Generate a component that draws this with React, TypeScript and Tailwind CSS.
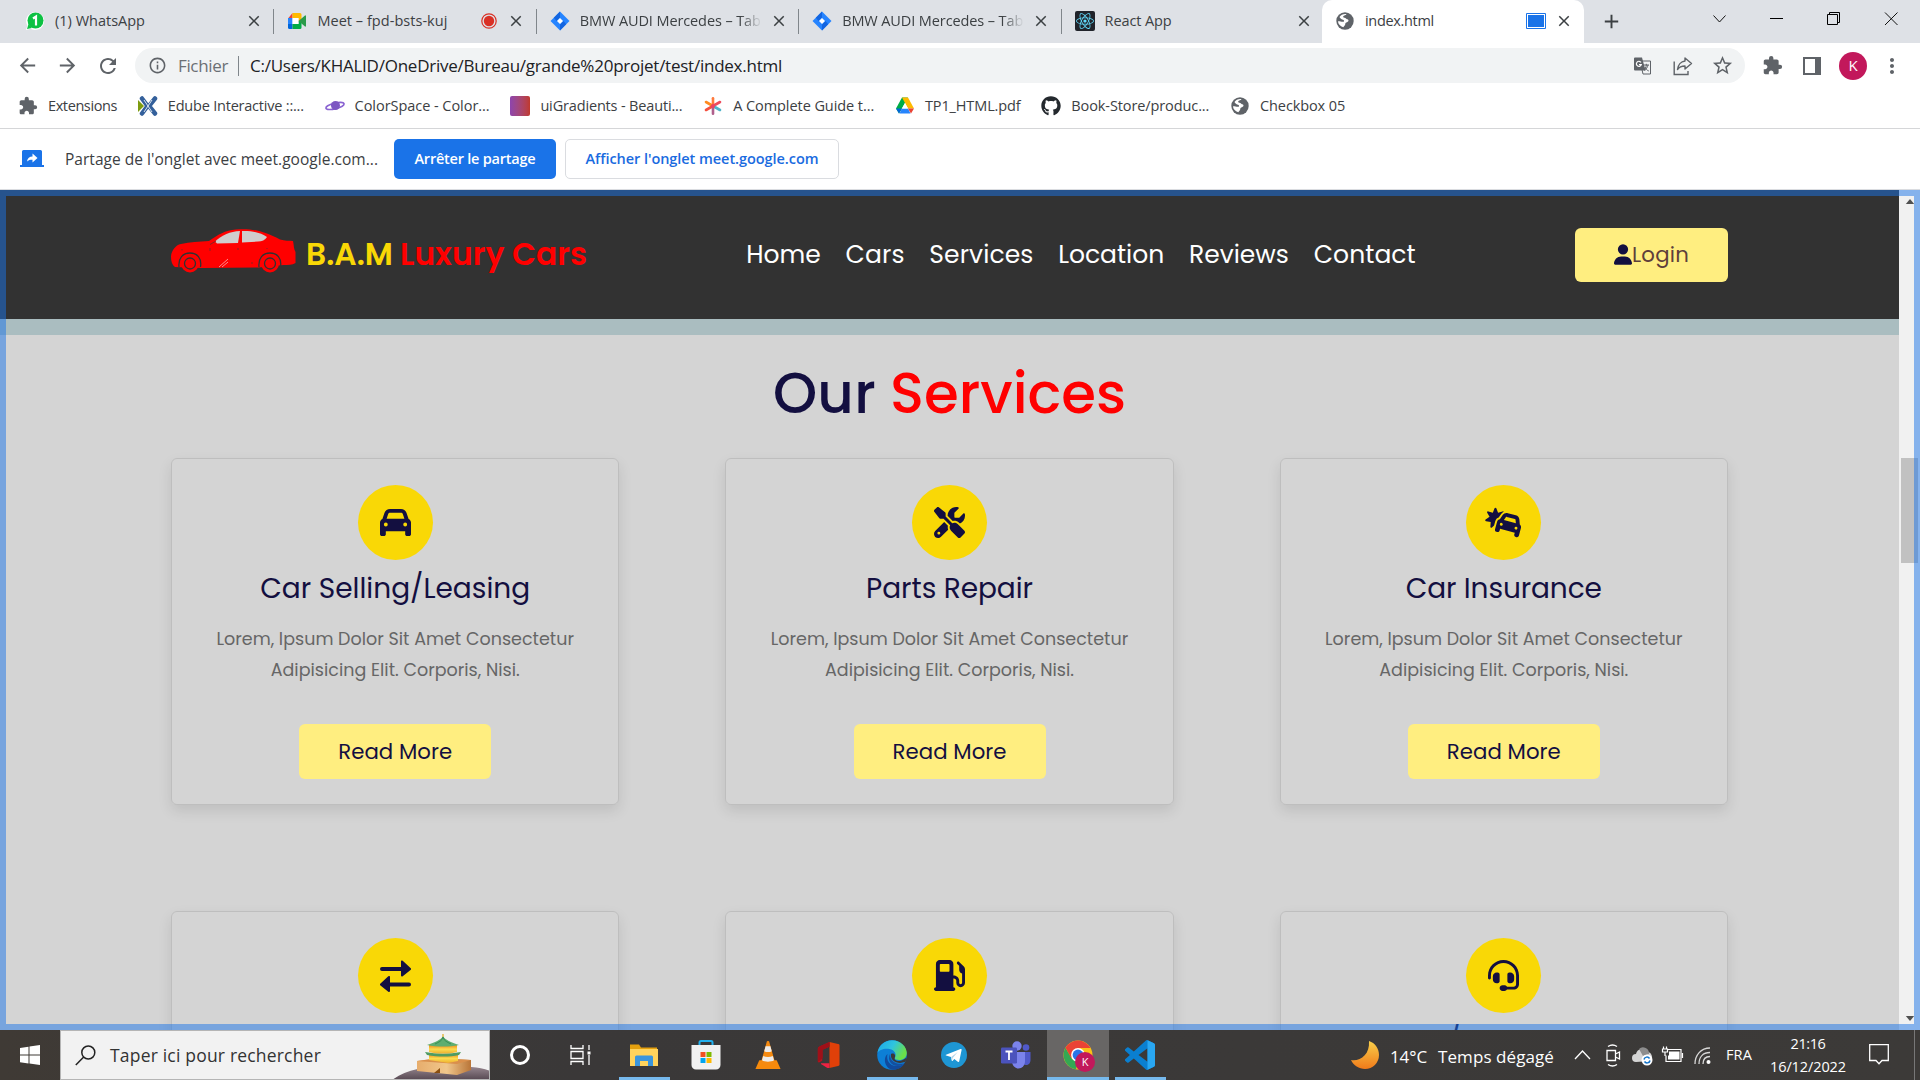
import { useLayoutEffect, useRef, useState, type ReactNode } from "react";
import { FaCar, FaCarBurst, FaGasPump, FaGithub, FaHeadset, FaReact, FaScrewdriverWrench, FaUser } from "react-icons/fa6";
import { MdArrowBack, MdArrowForward, MdClose, MdExtension, MdMoreVert, MdOutlineInfo, MdRefresh, MdStarBorder, MdAdd } from "react-icons/md";

/* One line of text tracked so that it fills a given width. */
function Line({ w, className = "", children }: { w: number; className?: string; children: string }) {
  const ref = useRef<HTMLSpanElement>(null);
  const [spacing, setSpacing] = useState(0);
  useLayoutEffect(() => {
    if (ref.current) {
      setSpacing((w - ref.current.getBoundingClientRect().width) / children.length);
    }
  }, [w, children]);
  return (
    <span className={"block shrink-0 whitespace-pre " + className} style={{ width: w }}>
      <span ref={ref} style={{ letterSpacing: spacing }}>{children}</span>
    </span>
  );
}

/* ---------- browser icons ---------- */

const WhatsApp = () => (
  <svg viewBox="0 0 20 20" className="size-5">
    <path d="M10 1a9 9 0 0 0-7.700 13.500L1 19l4.500-1.300A9 9 0 1 0 10 1z" fill="#fff" />
    <circle cx="10.500" cy="9.500" r="8" fill="#0dc143" />
    <path d="M2 18l1.500-5 3.500 4z" fill="#0dc143" />
    <path d="M8 7.500l3-2v9" stroke="#fff" strokeWidth="2.200" fill="none" />
  </svg>
);

const Meet = () => (
  <svg viewBox="0 0 20 20" className="size-5">
    <path d="M1 7.500L5.500 2v5.500z" fill="#ea4335" />
    <path d="M5.500 2H13a1.500 1.500 0 0 1 1.500 1.500V10h-3V7h-6z" fill="#ffba00" />
    <path d="M1 7h4.500v6H1z" fill="#2684fc" />
    <path d="M1 13h4.500v5H2.500A1.500 1.500 0 0 1 1 16.500z" fill="#0066da" />
    <path d="M5.500 13h6v-3h3v6.500A1.500 1.500 0 0 1 13 18H5.500z" fill="#00ac47" />
    <path d="M5.500 7h6v6h-6z" fill="#fff" />
    <path d="M11.500 10L18 4.500a.6.6 0 0 1 1 .5v10a.6.6 0 0 1-1 .5z" fill="#2b9a4a" />
  </svg>
);

const Jira = () => (
  <svg viewBox="0 0 20 20" className="size-5">
    <path d="M10 .5L19.500 10 10 19.500.5 10z" fill="#2684ff" />
    <path d="M10 .5v6L6.500 10 3.800 6.700z" fill="#1365e0" />
    <path d="M10 19.500v-6l3.500-3.500 2.700 3.300z" fill="#1365e0" />
    <path d="M10 7l3 3-3 3-3-3z" fill="#fff" />
  </svg>
);

const Globe = () => (
  <svg viewBox="0 0 18 18" className="size-[18px]">
    <circle cx="9" cy="9" r="8.700" fill="#5f6368" />
    <path d="M10.500 2.200c-1 1.400-3.500.8-3.300 2.800.1 1 2.300.4 2.800 1.500.4 1 2.700.6 2.500 2.200-.2 1.500-3 1.200-3.200 3 0 1.300-1 2-2 3.500C4 14 2 12 2 9.200 3.500 9 5.500 10 7.500 9.800c1-.2.600-1.800-.6-2C5 7.400 4 6 3.500 5 5 3 7.500 1.700 10.500 2.200z" fill="#fff" />
  </svg>
);

const Edube = () => (
  <svg viewBox="0 0 20 20" className="size-5">
    <path d="M4 2.500L9.500 10 4 17.500" stroke="#34609b" strokeWidth="4.500" strokeLinecap="round" fill="none" />
    <path d="M0 4l6 6-6 6z" fill="#7d9b10" />
    <path d="M17 2.500L11 10l6 7.500" stroke="#34609b" strokeWidth="4.500" strokeLinecap="round" fill="none" />
    <path d="M6 4l8 12M14 4L6 16" stroke="#dfe9f3" strokeWidth="1" />
  </svg>
);

const Planet = () => (
  <svg viewBox="0 0 20 20" className="size-5">
    <ellipse cx="10" cy="10" rx="9.300" ry="2.800" transform="rotate(-14 10 10)" fill="none" stroke="#8a63d2" strokeWidth="1.600" />
    <circle cx="10.500" cy="9.500" r="4.500" fill="#7d57c2" />
  </svg>
);

const Gradients = () => <span className="block size-5 rounded-xs bg-linear-to-r from-[#8e44ad] to-[#c0392b]" />;

const Asterisk = () => (
  <svg viewBox="0 0 20 20" className="size-5">
    <path d="M10 10V2.200" stroke="#ff7a3c" strokeWidth="2.600" strokeLinecap="round" />
    <path d="M10 10L3 6" stroke="#ff8a1f" strokeWidth="2.600" strokeLinecap="round" />
    <path d="M10 10l7-4" stroke="#ee4b5c" strokeWidth="2.600" strokeLinecap="round" />
    <path d="M10 10l7 4" stroke="#4fb3c8" strokeWidth="2.600" strokeLinecap="round" />
    <path d="M10 10l-7 4" stroke="#f4503f" strokeWidth="2.600" strokeLinecap="round" />
    <path d="M10 10v7.800" stroke="#b0608c" strokeWidth="2.600" strokeLinecap="round" />
    <circle cx="10" cy="10" r="2" fill="#ee4060" />
  </svg>
);

const Drive = () => (
  <svg viewBox="0 0 20 20" className="size-5">
    <path d="M7 1.500h6L4 17.500l-3-5z" fill="#00ac47" />
    <path d="M7 1.500h6l6 11h-6z" fill="#ffba00" />
    <path d="M7 12.500h6l2.500 5h-11z" fill="#2684fc" />
    <path d="M13 12.500h6l-3 5z" fill="#ea4335" />
    <path d="M4 17.500l-3-5h6z" fill="#0066da" />
    <path d="M7 12.500L10 7l3 5.500z" fill="#fff" />
  </svg>
);

const Translate = () => (
  <svg viewBox="0 0 18 18" className="size-[18px]">
    <path d="M6 4h10.500v13H9z" fill="none" stroke="#5f6368" strokeWidth="1" />
    <path d="M1 .5h7l3.500 13H1a1 1 0 0 1-1-1v-11a1 1 0 0 1 1-1z" fill="#5f6368" />
    <path d="M7 5.400A2.500 2.500 0 1 0 7.300 7.500H5" stroke="#fff" strokeWidth="1.200" fill="none" />
    <path d="M9.500 8h5.500M12.300 6.800V8c0 2-1.300 4-2.300 5M10.800 10c1 2 2.500 3.500 4 4M14 8c-.3 2-2 4.500-3.500 5.500" stroke="#5f6368" strokeWidth="1" fill="none" />
  </svg>
);

const Share = () => (
  <svg viewBox="0 0 20 20" className="size-5" fill="none" stroke="#5f6368" strokeWidth="1.400">
    <path d="M1.200 5.500v13H15v-3.500" />
    <path d="M12 2l6.500 5.500L12 13V10c-3.500 0-6 1.200-7.500 3.500C5 9 8 5.500 12 5z" strokeLinejoin="round" />
  </svg>
);

/* ---------- browser chrome ---------- */

function Tab({ icon, title, w, badge, active, faded }: { icon: ReactNode; title: string; w: number; badge?: ReactNode; active?: boolean; faded?: boolean }) {
  return (
    <div className={"flex h-[43px] w-[262.400px] shrink-0 items-center pb-px " + (active ? "-ml-[2px] rounded-t-[10px] bg-white" : "")}>
      <span className="ml-[13px] flex w-5 shrink-0 justify-center">{icon}</span>
      <span className={"ml-2.5 w-[182px] shrink-0 overflow-hidden " + (faded ? "mask-r-from-88%" : "")}>
        <span className="flex items-center pb-px">
          <Line w={w} className="text-[14.500px] leading-5 text-[#3c4043]">{title}</Line>
          {badge && <span className="ml-auto">{badge}</span>}
        </span>
      </span>
      <MdClose className="ml-2 size-[18px] shrink-0 text-[#3c4043]" />
      {!active && <span className="ml-auto h-[25px] w-px shrink-0 bg-[#80868b]" />}
    </div>
  );
}

function Bookmark({ icon, title, w }: { icon: ReactNode; title: string; w: number }) {
  return (
    <div className="flex items-center gap-2.5">
      <span className="flex w-5 justify-center">{icon}</span>
      <Line w={w} className="text-[14.500px] leading-5 text-[#3c4043]">{title}</Line>
    </div>
  );
}

function Browser() {
  return (
    <header className="bg-white">
      <div className="flex h-[43px] bg-[#dee1e6] pl-3">
        <Tab icon={<WhatsApp />} title="(1) WhatsApp" w={90} />
        <Tab
          icon={<Meet />}
          title="Meet – fpd-bsts-kuj"
          w={130}
          badge={<svg viewBox="0 0 16 16" className="mr-[2px] size-4"><circle cx="8" cy="8" r="7.200" fill="none" stroke="#d93025" strokeWidth="1.200" /><circle cx="8" cy="8" r="5.200" fill="#d93025" /></svg>}
        />
        <Tab icon={<Jira />} title="BMW AUDI Mercedes – Tab" w={181} faded />
        <Tab icon={<Jira />} title="BMW AUDI Mercedes – Tab" w={181} faded />
        <Tab icon={<span className="flex size-5 items-center justify-center rounded-xs bg-[#20232a]"><FaReact className="size-[18px] text-[#61dafb]" /></span>} title="React App" w={67} />
        <Tab
          active
          icon={<Globe />}
          title="index.html"
          w={69}
          badge={
            <svg viewBox="0 0 20 16" className="mr-px h-4 w-5">
              <path d="M.5.500h19v15H.5z" fill="#fff" stroke="#1a73e8" />
              <path d="M2 2h16v12H2z" fill="#1a73e8" />
            </svg>
          }
        />
        <MdAdd className="mt-[10px] ml-[16px] size-[23px] text-[#3c4043]" />
        <svg viewBox="0 0 190 20" className="mt-[9px] ml-[86px] h-5 w-[190px]" fill="none" stroke="#111" strokeWidth="1">
          <path d="M4.500 6.500l6 6.500 6-6.500" />
          <path d="M61 9.500h13" stroke="#000" />
          <path d="M118.500 5.500h10v10h-10zM120.500 5.500v-2h10v10h-2" stroke="#000" />
          <path d="M176 3.500l12.500 12.500M188.500 3.500L176 16" />
        </svg>
      </div>

      <div className="flex h-[45px] items-center">
        <MdArrowBack className="ml-4 size-[23px] text-[#5f6368]" />
        <MdArrowForward className="ml-[17px] size-[23px] text-[#5f6368]" />
        <MdRefresh className="ml-[17px] size-[24px] text-[#5f6368]" />
        <div className="ml-[15px] flex h-[35px] w-[1610px] items-center rounded-full bg-[#f1f3f4]">
          <MdOutlineInfo className="ml-[13px] size-[19px] text-[#5f6368]" />
          <Line w={50} className="ml-[11px] text-[17px] leading-6 text-[#6b6f74]">Fichier</Line>
          <span className="ml-[10px] h-5 w-px bg-[#80868b]" />
          <Line w={532} className="ml-[11px] text-[17px] leading-6 text-[#202124]">C:/Users/KHALID/OneDrive/Bureau/grande%20projet/test/index.html</Line>
          <span className="mr-[11px] ml-auto flex items-center gap-5">
            <span className="-mr-px"><Translate /></span>
            <span className="ml-[2px]"><Share /></span>
            <MdStarBorder className="-ml-[2px] size-[23px] text-[#5f6368]" />
          </span>
        </div>
        <MdExtension className="ml-[17px] size-[21px] text-[#5f6368]" />
        <span className="ml-5 block h-[18px] w-[18px] border-2 border-r-[6px] border-[#5f6368]" />
        <span className="ml-[18px] flex size-7 items-center justify-center rounded-full bg-[#c2185b] text-[15px] text-white">K</span>
        <MdMoreVert className="ml-[13px] size-6 text-[#5f6368]" />
      </div>

      <div className="flex h-[41px] items-center gap-[20.800px] border-b border-[#d5d6d8] pb-[4px] pl-[18px]">
        <Bookmark icon={<MdExtension className="size-5 text-[#5f6368]" />} title="Extensions" w={69} />
        <Bookmark icon={<Edube />} title="Edube Interactive ::..." w={136} />
        <Bookmark icon={<Planet />} title="ColorSpace - Color..." w={135} />
        <Bookmark icon={<Gradients />} title="uiGradients - Beauti..." w={142} />
        <Bookmark icon={<Asterisk />} title="A Complete Guide t..." w={141} />
        <Bookmark icon={<Drive />} title="TP1_HTML.pdf" w={95.500} />
        <Bookmark icon={<FaGithub className="size-5 text-[#24292e]" />} title="Book-Store/produc..." w={138} />
        <Bookmark icon={<Globe />} title="Checkbox 05" w={85} />
      </div>

      <div className="flex h-[61px] items-center border-b border-[#dadce0] pl-5">
        <svg viewBox="0 0 24 20" className="h-5 w-6">
          <path d="M3.500 1h17a1.500 1.500 0 0 1 1.500 1.500V16h2v2H0v-2h2V2.500A1.500 1.500 0 0 1 3.500 1z" fill="#1a73e8" />
          <path d="M7 12.500c.5-3.500 2.500-5 5.500-5.100V4.500l5 4.500-5 4.500v-2.800c-2.400 0-4 .3-5.500 1.800z" fill="#fff" />
        </svg>
        <Line w={313} className="ml-[21px] text-[15.500px] leading-6 text-[#3c4043]">Partage de l'onglet avec meet.google.com...</Line>
        <div className="ml-[16px] flex h-10 w-[162px] items-center justify-center rounded-[5px] bg-[#1a73e8]">
          <Line w={121} className="text-[14.500px] font-semibold text-white">Arrêter le partage</Line>
        </div>
        <div className="ml-[9px] flex h-10 w-[274px] items-center justify-center rounded-[5px] border border-[#dadce0]">
          <Line w={233} className="text-[14.500px] font-semibold text-[#1a6be0]">Afficher l'onglet meet.google.com</Line>
        </div>
      </div>
    </header>
  );
}

/* ---------- site ---------- */

const CarLogo = () => (
  <svg viewBox="0 0 126 44" className="-mt-2 -ml-px h-11 w-[126px]">
    <path d="M1 28c0-5 4-12 10-13 9-2 18-2.500 28-3C48 6 55 1 66 .5c16-1 27 1 44 10 5 1.500 9 1 13 1.500 1 4 .5 8 2.500 11v11c-3 2-8 2-12 2L88 38.500 32 39 5 38c-3-2-4-6-4-10z" fill="#f00" />
    <path d="M47 14.500l-2-2C52 6 60 2.500 70 2l-2 12z" fill="#d0cccc" />
    <path d="M72 2c10-.5 19 2 25 6-2 3-5 4.500-9 4.500L72 13.500z" fill="#d0cccc" />
    <path d="M9 38c-1-9 4-14 11-14s12 5 10.500 14M89 38c-1-9 4-14 11-14s12 5 10.500 14" fill="none" stroke="#323232" strokeWidth="1.300" />
    {[20, 100].map((x) => (
      <g key={x}>
        <circle cx={x} cy="34.500" r="9" fill="#f00" />
        <circle cx={x} cy="34.500" r="5.500" fill="none" stroke="#323232" strokeWidth="1.300" />
      </g>
    ))}
    <path d="M40 15.500l6-3.500M40 19v3M68 19v2M12 20v1.500M97 19v1M82 33v2" stroke="#8b2020" strokeWidth="1" />
    <path d="M49 38l9-8M52 38l6-5" stroke="#ff8c8c" strokeWidth="1" />
  </svg>
);

const Exchange = () => (
  <svg viewBox="0 0 31 32" className="h-8 w-[31px]" fill="currentColor">
    <path d="M2 7h19V1.500a1 1 0 0 1 1.700-.7L30.500 8a1.300 1.300 0 0 1 0 2L22.700 16.200a1 1 0 0 1-1.700-.7V11H2A2 2 0 0 1 2 7z" />
    <path d="M29 22.500H10V17a1 1 0 0 0-1.700-.7L.5 23.500a1.300 1.300 0 0 0 0 2l7.800 6.200A1 1 0 0 0 10 31v-4.500h19a2 2 0 0 0 0-4z" />
  </svg>
);

const nav = [
  { label: "Home", w: 74.5 },
  { label: "Cars", w: 59 },
  { label: "Services", w: 104 },
  { label: "Location", w: 106 },
  { label: "Reviews", w: 100 },
  { label: "Contact", w: 102 },
];

function Card({ icon, title, w, body }: { icon: ReactNode; title?: string; w?: number; body?: boolean }) {
  return (
    <article className="flex h-[347px] w-[448.500px] flex-col items-center rounded-md border border-black/10 pt-[26px] shadow-[0_6px_14px_rgba(0,0,0,0.1)]">
      <span className="flex size-[75px] shrink-0 items-center justify-center rounded-full bg-[#f9d806] text-[#130f40]">{icon}</span>
      {title && w && <Line w={w} className="mt-[9px] text-[28px] leading-10 text-[#130f40]">{title}</Line>}
      {body && (
        <>
          <div className="mt-[15px] flex flex-col items-center text-[17.500px] leading-[31px] text-[#666]">
            <Line w={357.5}>Lorem, Ipsum Dolor Sit Amet Consectetur</Line>
            <Line w={249}>Adipisicing Elit. Corporis, Nisi.</Line>
          </div>
          <span className="mt-[38px] flex h-[55px] w-[192px] shrink-0 items-center justify-center rounded-md bg-[#ffee80]">
            <Line w={114} className="text-[21.250px] leading-8 text-[#130f40]">Read More</Line>
          </span>
        </>
      )}
    </article>
  );
}

function Site() {
  return (
    <div className="relative flex h-[840px] overflow-hidden">
      <main className="h-[840px] w-[1859px] grow overflow-hidden bg-[#d4d4d4] font-[Poppins,Inter,sans-serif] [font-feature-settings:'cv11']">
        <div className="flex h-[129px] items-center justify-between bg-[#323232] px-[171px]">
          <div className="flex items-center">
            <CarLogo />
            <Line w={87} className="-mt-[2px] ml-[10px] text-[31.250px] leading-10 font-semibold text-[#f9d806]">B.A.M</Line>
            <Line w={187} className="-mt-[2px] ml-[7px] text-[31.250px] leading-10 font-semibold text-[#f00]">Luxury Cars</Line>
          </div>
          <nav className="flex gap-[24.800px]">
            {nav.map((n) => (
              <Line key={n.label} w={n.w} className="text-[25px] leading-9 text-white">{n.label}</Line>
            ))}
          </nav>
          <span className="flex h-[54px] w-[153px] items-center justify-center rounded-md bg-[#ffee80]">
            <FaUser className="h-[21px] w-[18px] text-[#130f40]" />
            <Line w={57} className="text-[21.250px] leading-8 text-[#5e3f3b]">Login</Line>
          </span>
        </div>
        <div className="h-4 bg-[#aabdc0]" />
        <h2 className="flex h-[123px] justify-center gap-[14px] pt-[23px]">
          <Line w={103} className="text-[56.250px] leading-[72px] font-medium text-[#130f40]">Our</Line>
          <Line w={236} className="text-[56.250px] leading-[72px] font-medium text-[#f00]">Services</Line>
        </h2>
        <section className="grid grid-cols-[448.500px_448.500px_448.500px] justify-center gap-x-[105.800px] gap-y-[106px]">
          <Card icon={<FaCar className="size-[31px]" />} title="Car Selling/Leasing" w={270} body />
          <Card icon={<FaScrewdriverWrench className="size-[31px]" />} title="Parts Repair" w={167} body />
          <Card icon={<FaCarBurst className="h-[31px] w-[38px]" />} title="Car Insurance" w={196} body />
          <Card icon={<Exchange />} />
          <Card icon={<FaGasPump className="size-[31px]" />} />
          <Card icon={<FaHeadset className="size-[31px]" />} title="24/7 Support" w={181} />
        </section>
      </main>
      <div className="flex w-[21px] shrink-0 flex-col items-center bg-[#f1f1f1]">
        <svg viewBox="0 0 10 6" className="mt-[9px] h-[5px] w-[10px] shrink-0"><path d="M0 6l5-6 5 6z" fill="#505050" /></svg>
        <span className="mt-[254px] block h-[105px] w-[17px] shrink-0 bg-[#c1c1c1]" />
        <svg viewBox="0 0 10 6" className="mt-auto mb-[9px] h-[5px] w-[10px] shrink-0"><path d="M0 0l5 6 5-6z" fill="#505050" /></svg>
      </div>
      <div className="pointer-events-none absolute inset-0 border-6 border-[#1a73e8]/50" />
    </div>
  );
}

/* ---------- taskbar ---------- */

const Pagoda = () => (
  <svg viewBox="0 0 100 48" className="mt-[3px] -mr-px block h-12 w-[100px]">
    <defs>
      <linearGradient id="hill" x1="0" y1="0" x2="0" y2="1"><stop offset="0" stopColor="#9a8a92" /><stop offset="1" stopColor="#51434d" /></linearGradient>
      <linearGradient id="wall" x1="0" y1="0" x2="0" y2="1"><stop offset="0" stopColor="#f08a1c" /><stop offset=".5" stopColor="#fbdc4e" /><stop offset="1" stopColor="#eeb030" /></linearGradient>
      <linearGradient id="base" x1="0" y1="0" x2="1" y2="0"><stop offset="0" stopColor="#e7ad6c" /><stop offset=".55" stopColor="#f0c78c" /><stop offset="1" stopColor="#b97538" /></linearGradient>
    </defs>
    <path d="M1 48C14 37 34 33 60 33c16 0 30 1 40 5v10z" fill="url(#hill)" />
    <path d="M27 28l22-3 32 2v10l-14 5-40-4z" fill="url(#base)" />
    <path d="M27 28l22-3 32 2-14 4z" fill="#d98f4c" />
    <path d="M39 21h29v7l-10 2-19-3z" fill="url(#wall)" />
    <path d="M35 19c12 2 24 2 36 0l-2 3c-10 2-20 2-32 0z" fill="#4f9c62" />
    <path d="M39 12h28v7c-8 2-20 2-28 0z" fill="url(#wall)" />
    <path d="M53 3c2 4 8 6 16 9-10 2-22 2-32 0C45 9 51 7 53 3z" fill="#5fae70" />
    <path d="M45 11c4-2 7-3 8-7M61 11c-4-2-7-3-8-7" stroke="#2f8350" strokeWidth=".8" fill="none" />
    <path d="M53 1v3" stroke="#e2b94a" strokeWidth="1.500" />
    <path d="M44 40l6-5v5z" fill="#8a4f10" />
  </svg>
);

const Explorer = () => (
  <svg viewBox="0 0 30 24" className="h-6 w-[30px]">
    <path d="M1 1.500h9l2 3h16V22H1z" fill="#e5a00d" />
    <path d="M1 6h28v17H1z" fill="#ffd35c" />
    <path d="M6 23v-9a1.500 1.500 0 0 1 1.500-1.500h15A1.500 1.500 0 0 1 24 14v9h-5v-5h-8v5z" fill="#3a95dc" />
  </svg>
);

const Store = () => (
  <svg viewBox="0 0 30 30" className="size-[30px]">
    <path d="M8.500 5V2.500A1.500 1.500 0 0 1 10 1h10a1.500 1.500 0 0 1 1.500 1.500V5" fill="none" stroke="#22b0ee" strokeWidth="2" />
    <path d="M.5 5h29v20a4.500 4.500 0 0 1-4.500 4.500H5A4.500 4.500 0 0 1 .5 25z" fill="#f1f1f1" />
    <path d="M9.500 12h5v5h-5z" fill="#f25022" /><path d="M15.500 12h5v5h-5z" fill="#7fba00" />
    <path d="M9.500 18h5v5h-5z" fill="#00a4ef" /><path d="M15.500 18h5v5h-5z" fill="#ffb900" />
  </svg>
);

const Vlc = () => (
  <svg viewBox="0 0 26 30" className="h-[29px] w-[26px]">
    <path d="M4 20h18l4 9H0z" fill="#f78a0b" />
    <path d="M11.500 1.500a1.500 1.500 0 0 1 3 0L20.500 23c-3 3-12 3-15 0z" fill="#f58a10" />
    <path d="M10.500 5.500h5l1.400 5c-2 1.200-5.800 1.200-7.800 0zM8 15.500c3 1.500 7 1.500 10 0l1.200 4.500c-3 2-9.500 2-12.400 0z" fill="#ececec" />
  </svg>
);

const Office = () => (
  <svg viewBox="0 0 24 28" className="-ml-1 h-7 w-[23px]">
    <path d="M13 .5l9 2a1.500 1.500 0 0 1 1.500 1.500v20a1.500 1.500 0 0 1-1.500 1.500l-9 2z" fill="#e04009" />
    <path d="M13 .5L2.500 5A3 3 0 0 0 .8 7.500v13c0 1 .8 1.500 1.700 1l3-1.500V8.500l7.500-3z" fill="#b6121b" />
    <path d="M13 .5v5L6 8.500V17l-5 4V8c0-2 .5-2.500 2-3.200z" fill="#9f1018" />
    <path d="M4.500 22.500H13v5c-1 .3-2 .2-3-.5l-5-3c-1-.6-1.200-1.500-.5-1.500z" fill="#ee2242" />
  </svg>
);

const Edge = () => (
  <svg viewBox="0 0 30 30" className="size-[30px]">
    <defs>
      <linearGradient id="edgeTop" x1="0" y1="0" x2="1" y2=".4"><stop offset="0" stopColor="#1ba5e8" /><stop offset=".55" stopColor="#2fc4df" /><stop offset="1" stopColor="#6adf4a" /></linearGradient>
    </defs>
    <circle cx="15" cy="15" r="14.800" fill="#0d7fd6" />
    <path d="M.5 13C1.500 5 8 .2 15 .2 24 .2 29.800 7 29.800 13c0 4.500-3.500 7-7.300 7-3.200 0-5-1-4.600-2.300 2-3 .1-7.700-5.400-8.700C7 8 2 10 .5 13z" fill="url(#edgeTop)" />
    <path d="M10.500 14c-1.500 6 2 12 9 12 3.500 0 6-1 8.500-2.800C25.500 27 21 30 15.500 29.800 9 29 5 19 10.500 14z" fill="#114a9c" />
    <path d="M14 14c3-1.500 5 1 3.700 4-.8 2 2.300 3.500 6 2.800 2-.5 4-1.800 6-3.300-.2 1.500-.6 3-1.300 4.300C21 25 13 21 14 14z" fill="#3b3838" />
    <path d="M13 14c-3 6 1 12 8 12 2.500 0 4.500-.9 5.900-2.700-5.500 1.700-14-.3-13.900-9.300z" fill="#154f9f" />
  </svg>
);

const Telegram = () => (
  <svg viewBox="0 0 26 26" className="size-[26px]">
    <circle cx="13" cy="13" r="13" fill="#1e96d4" />
    <path d="M5 12.800l14.500-5.700c.8-.3 1.300.2 1.100 1L18.300 19c-.2.900-.8 1.100-1.500.7l-3.500-2.600-1.800 1.800c-.4.300-.7.200-.8-.3L10 15l-4.900-1.400c-.7-.2-.7-.6-.1-.8z" fill="#fff" />
    <path d="M10.200 15l6.500-5-5 6-.7 2.500z" fill="#b3d5ea" />
  </svg>
);

const Teams = () => (
  <svg viewBox="0 0 30 28" className="h-7 w-[30px]">
    <circle cx="25" cy="6.500" r="3.300" fill="#5059c9" />
    <path d="M20 11h9.500v8c0 3-2 5-4.500 5s-4-1-5-3z" fill="#5059c9" />
    <circle cx="16" cy="5" r="4.700" fill="#7b83eb" />
    <path d="M11 11h13v9c0 4.500-3 7.500-6.500 7.500S11 24.500 11 20z" fill="#7b83eb" />
    <rect x="0" y="6.500" width="16" height="16" rx="1.300" fill="#4b53bc" />
    <path d="M4.500 10.500h7M8 10.500v8.500" stroke="#fff" strokeWidth="1.800" />
  </svg>
);

const Chrome = () => (
  <span className="relative block size-[30px]">
    <svg viewBox="0 0 30 30" className="size-[30px]">
      <circle cx="15" cy="15" r="14.500" fill="#fbc116" />
      <path d="M2.500 7.700L8.700 18.500 15 22l-2 7.300A14.500 14.500 0 0 1 2.500 7.700z" fill="#34a853" />
      <path d="M2.500 7.700A14.500 14.500 0 0 1 27.600 8H15L8.500 18.500z" fill="#ea4335" />
      <circle cx="15" cy="15" r="6.900" fill="#fff" />
      <circle cx="15" cy="15" r="5.400" fill="#2a74e8" />
    </svg>
    <span className="absolute -right-0.5 -bottom-0.5 flex size-5 items-center justify-center rounded-full bg-[#c2185b] text-[11px] text-white">K</span>
  </span>
);

const VsCode = () => (
  <svg viewBox="0 0 24 24" className="size-[30px]">
    <path d="M23.150 2.587L18.210.21a1.494 1.494 0 0 0-1.705.290l-9.460 8.630-4.120-3.128a.999.999 0 0 0-1.276.057L.327 7.261A1 1 0 0 0 .326 8.740L3.899 12 .326 15.260a1 1 0 0 0 .001 1.479L1.650 17.940a.999.999 0 0 0 1.276.057l4.120-3.128 9.460 8.630a1.492 1.492 0 0 0 1.704.290l4.942-2.377A1.500 1.500 0 0 0 24 20.060V3.939a1.500 1.500 0 0 0-.850-1.352zm-5.146 14.861L10.826 12l7.178-5.448v10.896z" fill="#0a7fd0" />
    <path d="M18 .2l5.150 2.387A1.500 1.500 0 0 1 24 3.940v16.120a1.500 1.500 0 0 1-.85 1.352L18 23.800z" fill="#29a7f2" />
  </svg>
);

function TaskItem({ children, open, current }: { children: ReactNode; open?: boolean; current?: boolean }) {
  return (
    <div className={"flex h-[50px] w-[62px] shrink-0 flex-col items-center " + (current ? "bg-[#686665]" : "")}>
      <span className="flex h-[47px] items-center pt-[3px]">{children}</span>
      {(open || current) && <span className={"h-[3px] bg-[#76b9ed] " + (current ? "w-full" : "w-[51px]")} />}
    </div>
  );
}

function Taskbar() {
  return (
    <footer className="flex h-[50px] items-center bg-linear-to-r from-[#3f3a35] via-[#3a3838] via-30% to-[#3c3a38] text-white">
      <span className="flex w-[60px] shrink-0 justify-center">
        <svg viewBox="0 0 20 20" className="size-5" fill="#fff">
          <path d="M0 3l8.500-1.300v7.900H0zM9.500 1.500L20 0v9.600H9.500zM0 10.500h8.500v7.900L0 17.200zM9.500 10.500H20V20L9.500 18.500z" />
        </svg>
      </span>
      <div className="flex h-[50px] w-[430px] shrink-0 items-center overflow-hidden border border-[#b5b5b5] bg-[#f2f2f2]">
        <svg viewBox="0 0 21 21" className="ml-[14px] size-[21px]" fill="none" stroke="#222" strokeWidth="1.500">
          <circle cx="13.300" cy="7.500" r="6.500" />
          <path d="M8.700 12L.8 20" />
        </svg>
        <Line w={211} className="ml-[14px] text-[17.500px] text-[#333]">Taper ici pour rechercher</Line>
        <span className="ml-auto"><Pagoda /></span>
      </div>
      <div className="-ml-px flex">
        <TaskItem><span className="block size-5 rounded-full border-[3px] border-white" /></TaskItem>
        <TaskItem>
          <svg viewBox="0 0 21 20" className="-ml-1 h-5 w-[21px]" fill="none" stroke="#fff" strokeWidth="1.300">
            <path d="M1 0v3.500h12V0M1 6.500h12v7H1zM1 20v-3.500h12V20M19 0v5M19 10v10" />
            <path d="M17.500 6.500h3v3h-3z" fill="#fff" stroke="none" />
          </svg>
        </TaskItem>
        <TaskItem open><Explorer /></TaskItem>
        <TaskItem><Store /></TaskItem>
        <TaskItem><Vlc /></TaskItem>
        <TaskItem><Office /></TaskItem>
        <TaskItem open><Edge /></TaskItem>
        <TaskItem><Telegram /></TaskItem>
        <TaskItem><Teams /></TaskItem>
        <TaskItem current><Chrome /></TaskItem>
        <TaskItem open><VsCode /></TaskItem>
      </div>
      <svg viewBox="0 0 28 28" className="ml-[180px] size-7 shrink-0">
        <defs><linearGradient id="moon" x1="0" y1="0" x2="0" y2="1"><stop offset="0" stopColor="#f9cf4a" /><stop offset="1" stopColor="#f07a1a" /></linearGradient></defs>
        <path d="M18 0c6 2 10 7.500 10 14a14 14 0 0 1-14 14C8 28 2.500 24.500 0 19c9 1.500 19-5 18-19z" fill="url(#moon)" />
      </svg>
      <Line w={37} className="ml-[11px] pt-[3px] text-[17px]">14°C</Line>
      <Line w={116} className="ml-[11px] pt-[3px] text-[17px]">Temps dégagé</Line>
      <svg viewBox="0 0 140 24" className="ml-[19px] h-6 w-[140px] shrink-0" fill="none" stroke="#fff" strokeWidth="1.300">
        <path d="M2 16l7.500-8 7.500 8" />
        <path d="M34 7.500h8.500v10H34zM42.500 11l4-2v7l-4-2M35 3.500c3-2 6-2 9 0M35 21.500c3 2 6 2 9 0" />
        <path d="M63 19a4 4 0 0 1 0-8 6 6 0 0 1 11-2 5 5 0 0 1 3 9z" fill="#d5d5d5" stroke="none" />
        <path d="M66 6a6 6 0 0 1 10 5l-6 2z" fill="#8d8d8d" stroke="none" />
        <circle cx="74" cy="17" r="5.500" fill="#fff" stroke="none" />
        <path d="M71 16.500a3 3 0 0 1 5.500-1M77 17.500a3 3 0 0 1-5.500 1" stroke="#1072c8" strokeWidth="1.500" />
        <path d="M94.500 6.500H108v12H93v-6M109.500 10v5M90.500 3.500v2.500M93.500 3.500v2.500M89.500 6h5v3h-5zM92 9v4" strokeWidth="1.200" />
        <path d="M96 8.500h10.500v8H95v-4h1z" fill="#fff" stroke="none" />
        <path d="M122 21C122 12 128 5 137 5M126 21c0-7 4-11.500 11-11.500M130 21c0-4.500 2.500-7.500 7-7.500" opacity=".8" />
        <circle cx="135.500" cy="19" r="2" fill="#fff" stroke="none" />
      </svg>
      <Line w={26} className="ml-[13px] text-[14.500px]">FRA</Line>
      <div className="ml-[18px] flex w-[76px] shrink-0 flex-col items-center gap-[3px] text-[14.500px] leading-5">
        <Line w={35}>21:16</Line>
        <Line w={76}>16/12/2022</Line>
      </div>
      <svg viewBox="0 0 20 22" className="ml-[23px] h-[22px] w-5 shrink-0" fill="none" stroke="#fff" strokeWidth="1.300">
        <path d="M.7.7h18.600v15.800H13l-3 3.300-3-3.300H.7z" />
      </svg>
      <span className="ml-[25px] h-[50px] w-px bg-[#777]" />
    </footer>
  );
}

export default function App() {
  return (
    <div className="h-[1080px] w-[1920px] overflow-hidden bg-white font-['Open_Sans',sans-serif]">
      <Browser />
      <Site />
      <Taskbar />
    </div>
  );
}
